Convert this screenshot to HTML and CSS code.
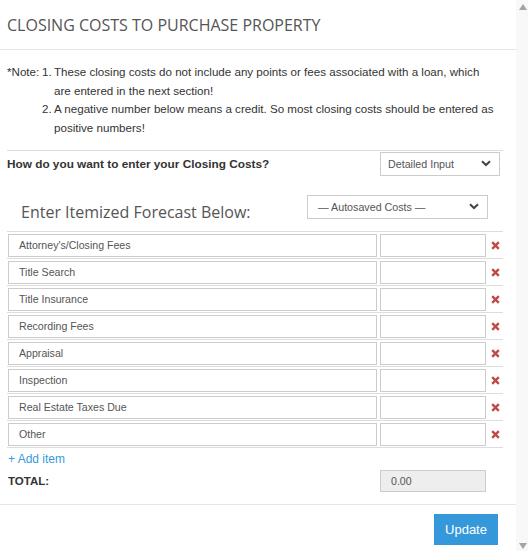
FILE: index.html
```html
<!DOCTYPE html>
<html>
<head>
<meta charset="utf-8">
<link rel="stylesheet" href="styles.css">
</head>
<body>
<div class="page">
  <div class="main">
    <div class="header"><h1 class="title">CLOSING COSTS TO PURCHASE PROPERTY</h1></div>
    <div class="note">
      <span class="note-label">*Note:</span>
      <div class="note-list">
        <div class="note-item"><span class="num">1.</span><span>These closing costs do not include any points or fees associated with a loan, which are entered in the next section!</span></div>
        <div class="note-item"><span class="num">2.</span><span>A negative number below means a credit. So most closing costs should be entered as positive numbers!</span></div>
      </div>
    </div>
    <div class="content">
      <div class="question">
        <span class="q-label">How do you want to enter your Closing Costs?</span>
        <div class="select select-mode"><span>Detailed Input</span><svg width="10" height="7" viewBox="0 0 10 7"><path d="M1 1.2 L5 5 L9 1.2" fill="none" stroke="#444" stroke-width="2"/></svg></div>
      </div>
      <div class="forecast">
        <span class="forecast-title">Enter Itemized Forecast Below:</span>
        <div class="select select-auto"><span>— Autosaved Costs —</span><svg width="10" height="7" viewBox="0 0 10 7"><path d="M1 1.2 L5 5 L9 1.2" fill="none" stroke="#444" stroke-width="2"/></svg></div>
      </div>
      <div class="items">
        <div class="item"><div class="field label-field">Attorney's/Closing Fees</div><div class="field value-field"></div><svg class="remove" width="9" height="9" viewBox="0 0 9 9"><path d="M1.2 1.2 L7.8 7.8 M7.8 1.2 L1.2 7.8" stroke="#bd4b48" stroke-width="2.4"/></svg></div>
        <div class="item"><div class="field label-field">Title Search</div><div class="field value-field"></div><svg class="remove" width="9" height="9" viewBox="0 0 9 9"><path d="M1.2 1.2 L7.8 7.8 M7.8 1.2 L1.2 7.8" stroke="#bd4b48" stroke-width="2.4"/></svg></div>
        <div class="item"><div class="field label-field">Title Insurance</div><div class="field value-field"></div><svg class="remove" width="9" height="9" viewBox="0 0 9 9"><path d="M1.2 1.2 L7.8 7.8 M7.8 1.2 L1.2 7.8" stroke="#bd4b48" stroke-width="2.4"/></svg></div>
        <div class="item"><div class="field label-field">Recording Fees</div><div class="field value-field"></div><svg class="remove" width="9" height="9" viewBox="0 0 9 9"><path d="M1.2 1.2 L7.8 7.8 M7.8 1.2 L1.2 7.8" stroke="#bd4b48" stroke-width="2.4"/></svg></div>
        <div class="item"><div class="field label-field">Appraisal</div><div class="field value-field"></div><svg class="remove" width="9" height="9" viewBox="0 0 9 9"><path d="M1.2 1.2 L7.8 7.8 M7.8 1.2 L1.2 7.8" stroke="#bd4b48" stroke-width="2.4"/></svg></div>
        <div class="item"><div class="field label-field">Inspection</div><div class="field value-field"></div><svg class="remove" width="9" height="9" viewBox="0 0 9 9"><path d="M1.2 1.2 L7.8 7.8 M7.8 1.2 L1.2 7.8" stroke="#bd4b48" stroke-width="2.4"/></svg></div>
        <div class="item"><div class="field label-field">Real Estate Taxes Due</div><div class="field value-field"></div><svg class="remove" width="9" height="9" viewBox="0 0 9 9"><path d="M1.2 1.2 L7.8 7.8 M7.8 1.2 L1.2 7.8" stroke="#bd4b48" stroke-width="2.4"/></svg></div>
        <div class="item"><div class="field label-field">Other</div><div class="field value-field"></div><svg class="remove" width="9" height="9" viewBox="0 0 9 9"><path d="M1.2 1.2 L7.8 7.8 M7.8 1.2 L1.2 7.8" stroke="#bd4b48" stroke-width="2.4"/></svg></div>
      </div>
      <div class="add-item">+ Add item</div>
      <div class="total">
        <span class="total-label">TOTAL:</span>
        <div class="field total-field">0.00</div>
      </div>
    </div>
    <div class="footer"><button class="update">Update</button></div>
  </div>
  <div class="scrollbar">
    <svg width="8" height="6" viewBox="0 0 8 6"><path d="M0 6 L4 0 L8 6 Z" fill="#a3a3a3"/></svg>
    <svg width="8" height="6" viewBox="0 0 8 6"><path d="M0 0 L8 0 L4 6 Z" fill="#a3a3a3"/></svg>
  </div>
</div>
</body>
</html>
```

FILE: styles.css
```css
* { box-sizing: border-box; }
html, body { margin: 0; padding: 0; background: #fff; }
body { font-family: "Liberation Sans", Arial, sans-serif; color: #333; font-size: 12px; }
.page { display: flex; width: 528px; height: 551px; overflow: hidden; }
.main { width: 516px; flex: none; }
.header { height: 50px; border-bottom: 1px solid #e5e5e5; padding: 0 7px; display: flex; align-items: center; }
.title { margin: 0; font-family: "Open Sans", sans-serif; font-weight: 400; font-size: 16px; color: #555; line-height: 20px; }
.note { display: flex; padding: 13px 19px 12px 7px; line-height: 18.7px; font-size: 11.6px; color: #333; }
.note-label { width: 35px; flex: none; }
.note-list { display: flex; flex-direction: column; }
.note-item { display: flex; }
.num { width: 12px; flex: none; }
.content { margin: 0 13px 0 7px; }
.question { border-top: 1px solid #ddd; display: flex; align-items: center; justify-content: space-between; padding: 1px 3px 0 0; height: 26px; }
.q-label { font-weight: bold; font-size: 11.8px; color: #333; }
.select { display: flex; align-items: center; justify-content: space-between; border: 1px solid #ccc; background: #fff; height: 24px; font-size: 10.7px; color: #555; padding: 0 8px 0 9px; }
.select-mode { width: 120px; padding-left: 7px; }
.select-auto { width: 181px; padding-left: 10px; }
.forecast { display: flex; align-items: center; justify-content: space-between; padding: 19px 15px 12px 14px; }
.forecast-title { font-family: "Open Sans", sans-serif; font-size: 16px; color: #555; position: relative; top: 5px; }
.items { display: flex; flex-direction: column; }
.item { display: flex; align-items: center; border-top: 1px solid #ddd; padding: 2px 0 1px 1px; height: 27px; }
.field { border: 1px solid #ccc; height: 23px; font-size: 10.6px; color: #555; display: flex; align-items: center; padding: 0 10px; background: #fff; }
.label-field { width: 369px; }
.value-field { width: 106px; margin-left: 3px; }
.remove { margin-left: 5px; }
.add-item { border-top: 1px solid #ddd; color: #3a9ad9; font-size: 12px; padding: 4px 0 0 1px; line-height: 14px; }
.total { display: flex; align-items: center; justify-content: space-between; padding: 4px 17px 0 1px; }
.total-label { font-weight: bold; font-size: 11.5px; color: #333; }
.total-field { width: 106px; height: 22px; background: #eee; color: #555; font-size: 10.6px; }
.footer { margin-top: 12px; border-top: 1px solid #e5e5e5; display: flex; justify-content: flex-end; padding: 9px 18px 0 0; }
.update { width: 64px; height: 31px; background: #3498db; color: #fff; border: none; font-family: "Liberation Sans", Arial, sans-serif; font-size: 13px; padding: 0; }
.scrollbar { width: 12px; flex: none; background: #f8f8f8; display: flex; flex-direction: column; justify-content: space-between; align-items: center; padding: 4px 0 2px 2px; }
```
